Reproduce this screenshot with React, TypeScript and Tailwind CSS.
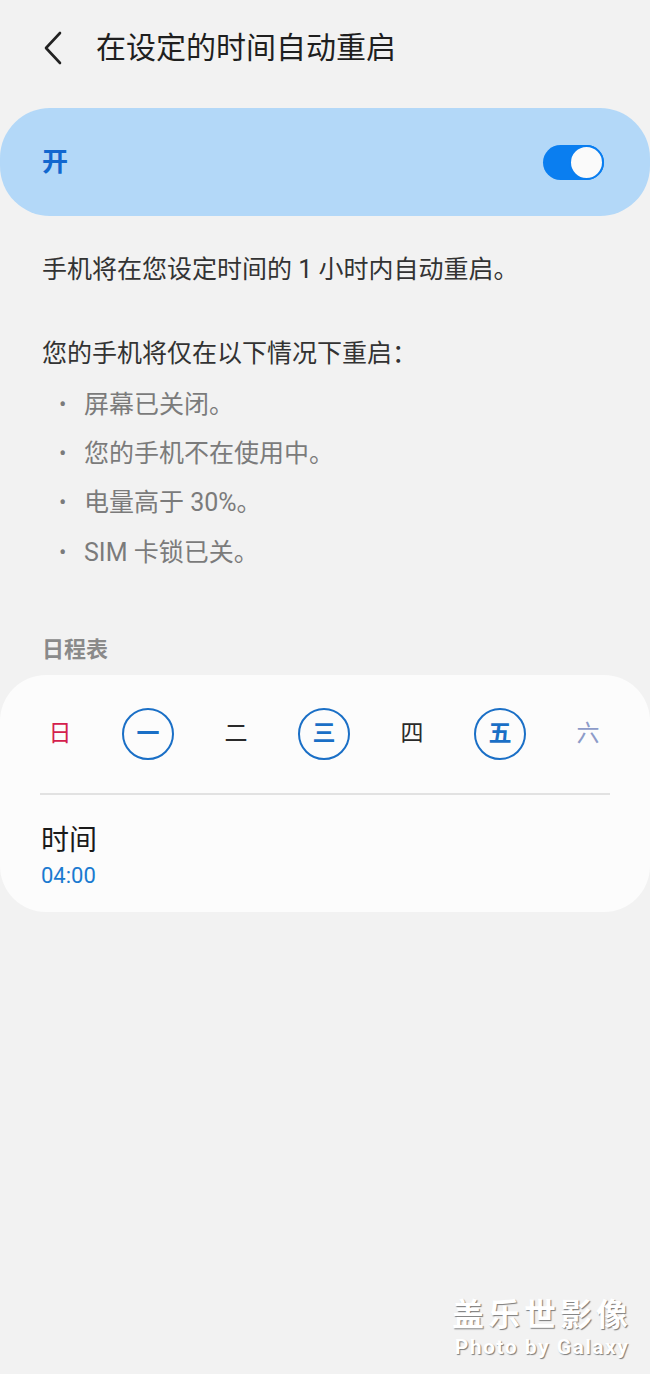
import React from "react";

const days = [
  { label: "日", selected: false, tone: "text-[#d4204c]" },
  { label: "一", selected: true, tone: "" },
  { label: "二", selected: false, tone: "text-[#2a2a2a]" },
  { label: "三", selected: true, tone: "" },
  { label: "四", selected: false, tone: "text-[#2a2a2a]" },
  { label: "五", selected: true, tone: "" },
  { label: "六", selected: false, tone: "text-[#8d9bc9]" },
];

const conditions = ["屏幕已关闭。", "您的手机不在使用中。", "电量高于 30%。", "SIM 卡锁已关。"];

export default function App() {
  return (
    <div className="relative min-h-[1374px] w-[650px] bg-[#f2f2f2] font-['Roboto','Noto_Sans_CJK_SC',sans-serif]">
      {/* header */}
      <div className="flex h-[96px] items-center">
        <div className="ml-[42px] flex w-[54px] items-center">
          <svg width="22" height="36" viewBox="0 0 22 36" fill="none">
            <path d="M18 3 L4 18 L18 33" stroke="#222" strokeWidth="2.6" strokeLinecap="round" strokeLinejoin="round" />
          </svg>
        </div>
        <h1 className="text-[30px] leading-none text-[#1f1f1f]">在设定的时间自动重启</h1>
      </div>

      {/* master switch */}
      <div className="mt-3 flex h-[108px] items-center justify-between rounded-[50px] bg-[#b3d8f8] pl-[42px] pr-[46px]">
        <span className="text-[26px] font-bold text-[#1267cf]">开</span>
        <div className="flex h-[35px] w-[61px] items-center justify-end rounded-full bg-[#0a7ef0]">
          <div className="h-[35px] w-[35px] rounded-full border-2 border-[#0a7ef0] bg-[#fafafa]" />
        </div>
      </div>

      {/* description */}
      <div className="px-[42px] text-[25px] text-[#333]">
        <p className="mt-[38px] leading-[32px]">手机将在您设定时间的 1 小时内自动重启。</p>
        <p className="mt-[52px] leading-[32px]">您的手机将仅在以下情况下重启：</p>
        <ul className="mt-[10px] text-[#7b7b7b]">
          {conditions.map((c) => (
            <li key={c} className="flex h-[49.3px] items-center">
              <span className="w-[42px] pl-[17px] text-[22px] leading-none">•</span>
              <span>{c}</span>
            </li>
          ))}
        </ul>
      </div>

      {/* schedule */}
      <div className="mt-[59px] px-[42px] text-[22px] font-bold leading-[28px] text-[#8a8a8a]">日程表</div>

      <div className="mt-[11px] rounded-[46px] bg-[#fcfcfc] pb-[23px]">
        <div className="grid h-[118px] grid-cols-[repeat(7,88px)] items-center pl-4">
          {days.map((d) => (
            <div key={d.label} className="flex justify-center">
              {d.selected ? (
                <div className="flex h-[52px] w-[52px] items-center justify-center rounded-full border-2 border-[#1a6fc6] text-[23px] font-bold text-[#1a6fc6]">
                  {d.label}
                </div>
              ) : (
                <span className={`text-[23px] ${d.tone}`}>{d.label}</span>
              )}
            </div>
          ))}
        </div>
        <div className="mx-[40px] h-[2px] bg-[#e2e2e2]" />
        <div className="px-[41px] pt-[29px]">
          <div className="text-[28px] leading-[34px] text-[#1a1a1a]">时间</div>
          <div className="mt-[5px] text-[22px] leading-[26px] text-[#1a7ad0]">04:00</div>
        </div>
      </div>

      {/* watermark */}
      <div className="absolute bottom-[14px] right-[18px] flex flex-col items-center text-white [text-shadow:1px_1px_1px_#7a7a7a]">
        <span className="text-[32px] font-bold leading-[38px] tracking-[4px]">盖乐世影像</span>
        <span className="text-[21px] font-bold leading-[26px] tracking-[1.5px]">Photo by Galaxy</span>
      </div>
    </div>
  );
}
